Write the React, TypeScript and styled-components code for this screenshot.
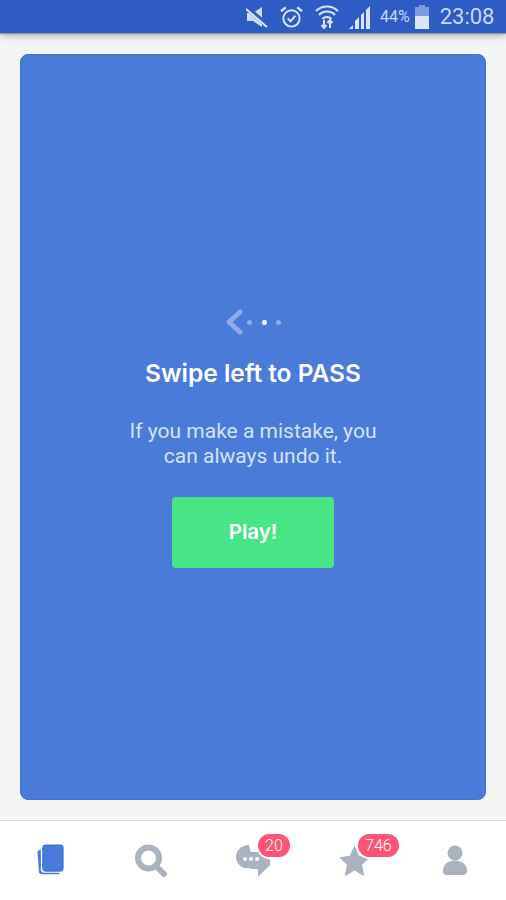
import styled, { createGlobalStyle } from 'styled-components';

const GlobalStyle = createGlobalStyle`
  html, body {
    margin: 0;
    padding: 0;
    background: #f4f5f7;
    font-family: "Roboto", "Liberation Sans", sans-serif;
  }
`;

function App() {
  return (
    <Screen>
      <GlobalStyle />
      <StatusBar>
        <StatusIcon width="23" height="22" viewBox="0 0 23 22" $left={246}>
          <path d="M1 7h6l9-6v20l-9-6H1z" fill="#cfdcf4" />
          <path d="M1 2l22 19" stroke="#2f5cc4" strokeWidth="5" />
          <path d="M0 3l21 18" stroke="#dbe4f7" strokeWidth="2" />
        </StatusIcon>
        <StatusIcon width="23" height="24" viewBox="0 0 24 24" $left={11}>
          <circle cx="12" cy="13.5" r="8.5" fill="none" stroke="#dbe4f7" strokeWidth="2" />
          <path d="M8 13.5l3 3 5-6" fill="none" stroke="#dbe4f7" strokeWidth="2" />
          <path d="M1 6l5-4M23 6l-5-4" stroke="#dbe4f7" strokeWidth="2.4" />
        </StatusIcon>
        <StatusIcon width="24" height="26" viewBox="0 0 24 26" $left={12}>
          <path d="M1 7a15.5 15.5 0 0 1 22 0M4 11a11 11 0 0 1 16 0M7.5 15a6 6 0 0 1 9 0" fill="none" stroke="#dbe4f7" strokeWidth="2" />
          <path d="M9 16v8M6.5 21l2.5 3 2.500-3M15 24v-8M12.500 19l2.500-3 2.500 3" fill="none" stroke="#dbe4f7" strokeWidth="2" />
        </StatusIcon>
        <StatusIcon width="22" height="24" viewBox="0 0 22 24" $left={10}>
          <path d="M0 24l4-4v4zM6 24v-8l4-4v12zM12 24V10l3-3v17zM17 24V5l4-4v23z" fill="#dbe4f7" />
        </StatusIcon>
        <Battery>44%</Battery>
        <StatusIcon width="14" height="24" viewBox="0 0 14 24" $left={5}>
          <path d="M4 0h6v2h4v9H0V2h4z" fill="#7d9ade" />
          <rect x="0" y="11" width="14" height="13" fill="#dbe4f7" />
        </StatusIcon>
        <Clock>23:08</Clock>
      </StatusBar>

      <Main>
        <Card>
          <Hint>
            <HintArrow width="18" height="26" viewBox="0 0 18 26">
              <path d="M15 3L4 13l11 10" fill="none" stroke="#8eabe9" strokeWidth="5" strokeLinecap="round" strokeLinejoin="round" />
            </HintArrow>
            <Dot />
            <Dot $active />
            <Dot />
          </Hint>
          <Title>Swipe left to PASS</Title>
          <Body>
            If you make a mistake, you
            <br />
            can always undo it.
          </Body>
          <PlayButton>Play!</PlayButton>
        </Card>
      </Main>

      <Nav>
        <NavItem>
          <svg width="29" height="33" viewBox="0 0 30 34">
            <path d="M5 5.5l-2 .8c-1 .4-1.500 1.400-1.400 2.500L3 29c.1 1.300 1 2.200 2.300 2.200h17c1.200 0 2-.6 2.200-1.600H8c-1.800 0-3-1.200-3-3z" fill="#4a7bd8" />
            <rect x="7" y="1" width="21" height="27" rx="2.500" fill="#4a7bd8" stroke="#3566cc" strokeWidth="1" />
          </svg>
        </NavItem>
        <NavItem>
          <svg width="34" height="34" viewBox="0 0 34 34">
            <circle cx="14.500" cy="14" r="10.500" fill="none" stroke="#abb2bf" strokeWidth="6" />
            <path d="M23 23l7 7" stroke="#abb2bf" strokeWidth="6" strokeLinecap="round" />
          </svg>
        </NavItem>
        <NavItem>
          <svg width="36" height="34" viewBox="0 0 36 34">
            <path d="M14 1C6.300 1 1 6.500 1 13c0 5 3.200 9 8 11h11z" fill="#abb2bf" />
            <path d="M16 8c-6 1-9 5-8 10 1 4 5 7 10 7h5v8l12-12c.5-5-1-10-5-13z" fill="#abb2bf" />
            <circle cx="10" cy="15" r="2" fill="#fff" />
            <circle cx="16" cy="15" r="2" fill="#fff" />
            <circle cx="22" cy="15" r="2" fill="#fff" />
          </svg>
          <Badge $left={57}>20</Badge>
        </NavItem>
        <NavItem>
          <svg width="31" height="32" viewBox="0 0 32 32">
            <path d="M16 1l4.600 10.200L31 12.500l-7.700 7.300L25.500 31 16 25.300 6.500 31l2.200-11.200L1 12.500l10.400-1.300z" fill="#abb2bf" stroke="#abb2bf" strokeWidth="1" strokeLinejoin="round" />
          </svg>
          <Badge $left={54}>746</Badge>
        </NavItem>
        <NavItem>
          <svg width="26" height="32" viewBox="0 0 26 32">
            <circle cx="13" cy="8" r="7.500" fill="#abb2bf" />
            <path d="M1 26c0-6.500 5-10.500 12-10.500S25 19.500 25 26c0 2.500-1.500 4-4 4H5c-2.500 0-4-1.500-4-4z" fill="#abb2bf" />
          </svg>
        </NavItem>
      </Nav>
    </Screen>
  );
}

export default App;

const Screen = styled.div`
  width: 506px;
  height: 900px;
  display: flex;
  flex-direction: column;
  background: #f4f5f7;
  overflow: hidden;
`;

const StatusBar = styled.header`
  height: 33px;
  flex-shrink: 0;
  display: flex;
  align-items: center;
  padding-right: 12px;
  background: #2f5cc4;
  box-shadow: 0 1px 1px #8f97a8, 0 2px 8px rgba(60, 65, 80, 0.45);
  position: relative;
  z-index: 1;
`;

const StatusIcon = styled.svg<{ $left: number }>`
  flex-shrink: 0;
  margin-left: ${(p) => p.$left}px;
`;

const Battery = styled.span`
  margin-left: 9px;
  font-size: 16px;
  color: #c9d6f2;
`;

const Clock = styled.span`
  margin-left: 11px;
  font-size: 22px;
  color: #c9d6f2;
`;

const Main = styled.main`
  flex: 1;
  display: flex;
  padding: 21px 20px 20px;
`;

const Card = styled.section`
  flex: 1;
  display: flex;
  flex-direction: column;
  align-items: center;
  padding-top: 254px;
  background: #4a7bd8;
  border: 1px solid #3f73d6;
  border-radius: 8px;
  box-sizing: border-box;
`;

const Hint = styled.div`
  height: 26px;
  display: flex;
  align-items: center;
  gap: 9.5px;
`;

const HintArrow = styled.svg`
  margin-right: -5px;
`;

const Dot = styled.span<{ $active?: boolean }>`
  width: 5px;
  height: 5px;
  border-radius: 50%;
  background: ${(p) => (p.$active ? '#ffffff' : '#8eabe9')};
`;

const Title = styled.h1`
  margin: 22px 0 0;
  font-family: "Inter", "Liberation Sans", sans-serif;
  font-size: 24.5px;
  line-height: 32px;
  font-weight: 600;
  color: #ffffff;
`;

const Body = styled.p`
  margin: 30px 0 0;
  font-size: 21px;
  line-height: 24.500px;
  text-align: center;
  color: #d5e0f6;
`;

const PlayButton = styled.button`
  width: 162px;
  height: 71px;
  margin-top: 29px;
  padding: 0 0 3px;
  border: none;
  border-radius: 4px;
  background: #48e587;
  color: #ffffff;
  font-family: "Inter", "Liberation Sans", sans-serif;
  font-size: 20.5px;
  font-weight: 600;
`;

const Nav = styled.nav`
  height: 79px;
  flex-shrink: 0;
  display: grid;
  grid-template-columns: 101px 100px 103px 100px 102px;
  background: #ffffff;
  border-top: 1px solid #d9dbdf;
`;

const NavItem = styled.div`
  position: relative;
  display: flex;
  align-items: center;
  justify-content: center;
`;

const Badge = styled.span<{ $left: number }>`
  position: absolute;
  top: 13px;
  left: ${(p) => p.$left}px;
  height: 23px;
  padding: 0 7px;
  border-radius: 12px;
  background: #ff5476;
  box-shadow: 0 0 0 2px #ffffff;
  color: #ffffff;
  font-size: 16px;
  font-weight: 300;
  line-height: 23px;
`;
